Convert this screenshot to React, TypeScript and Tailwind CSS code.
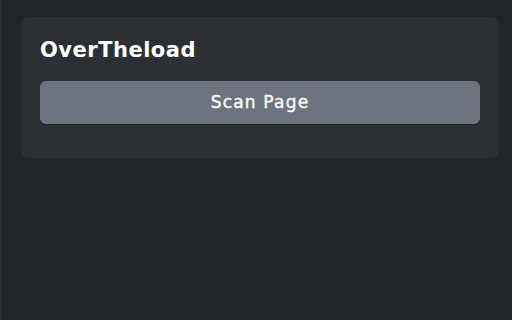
export default function App() {
  return (
    <div className="h-[320px] w-[512px] overflow-hidden border-l-2 border-[#2b3035] bg-[#212529] pt-[17px] pl-[19px] font-['DejaVu_Sans',sans-serif] text-white">
      <div className="w-[478px] rounded-lg bg-[#2b3035] px-[19px] pt-[19px] pb-[34px]">
        <h1 className="text-[21px] leading-[28px] font-bold tracking-[0.5px]">OverTheload</h1>
        <button className="mt-[17px] flex h-[43px] w-full items-center justify-center rounded-md border border-[#6c757d] bg-[#6c757d] text-[17px] font-normal tracking-[1.2px] text-[#f8f9fa] shadow-[0_1px_0_rgba(0,0,0,0.25)] [-webkit-text-stroke:0.45px_#f8f9fa]">
          Scan Page
        </button>
      </div>
    </div>
  );
}
